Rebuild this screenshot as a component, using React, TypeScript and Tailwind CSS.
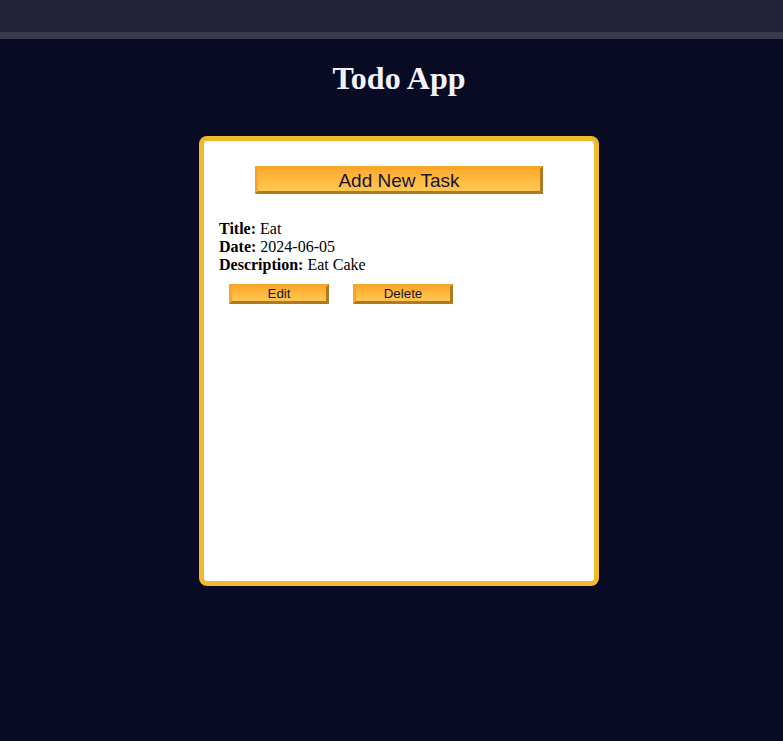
const tasks = [{ title: "Eat", date: "2024-06-05", description: "Eat Cake" }];

const btn =
  "border-[3px] border-t-[#f9a529] border-l-[#f9a529] border-b-[#b07a22] border-r-[#b07a22] bg-gradient-to-b from-[#ffab2c] to-[#ffc852] text-[#15152a] font-['Liberation_Sans',Arial,sans-serif] leading-none";

export default function App() {
  return (
    <div className="min-h-[741px] bg-[#090a23] font-['Liberation_Serif','Times_New_Roman',serif]">
      <div className="h-[32px] bg-[#23243a]" />
      <div className="h-[7px] bg-[#3a3b4e]" />
      <div className="pl-[15px]">
        <h1 className="mt-[21px] text-center text-[32px] leading-[37px] font-bold text-[#f3f4ff]">
          Todo App
        </h1>
        <div className="mx-auto mt-[39px] w-[400px] h-[450px] rounded-[8px] border-[5px] border-[#f2b92c] bg-white">
          <div className="flex justify-center pt-[25px]">
            <button className={`${btn} w-[288px] h-[28px] text-[19px]`}>Add New Task</button>
          </div>
          {tasks.map((t) => (
            <div key={t.title} className="mt-[26px] pl-[15px] text-[16px] leading-[18px] text-black">
              <div>
                <b>Title:</b> {t.title}
              </div>
              <div>
                <b>Date:</b> {t.date}
              </div>
              <div>
                <b>Description:</b> {t.description}
              </div>
              <div className="mt-[10px] ml-[10px] flex gap-[24px]">
                <button className={`${btn} w-[100px] h-[20px] text-[13.33px]`}>Edit</button>
                <button className={`${btn} w-[100px] h-[20px] text-[13.33px]`}>Delete</button>
              </div>
            </div>
          ))}
        </div>
      </div>
    </div>
  );
}
